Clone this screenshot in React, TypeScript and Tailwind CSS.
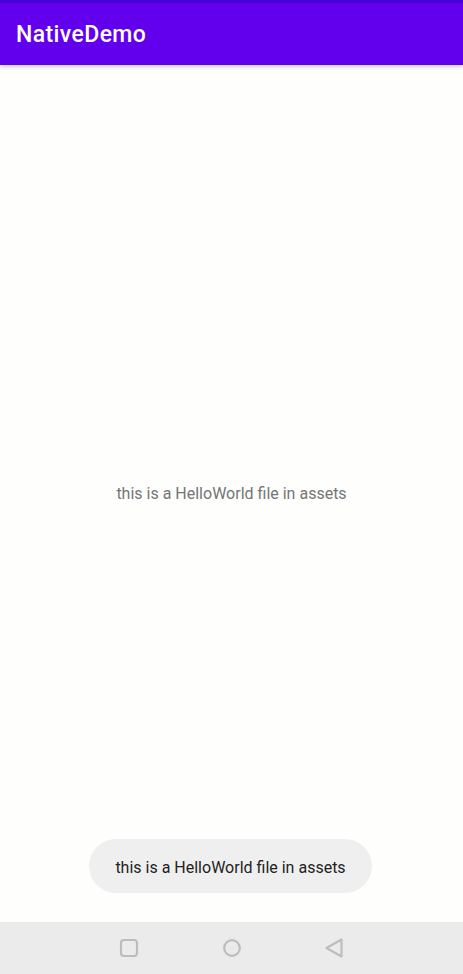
export default function App() {
  const msg = "this is a HelloWorld file in assets";

  return (
    <div
      className="relative flex h-[974px] w-[463px] flex-col overflow-hidden bg-[#fefffd]"
      style={{ fontFamily: "Roboto, 'Noto Sans', sans-serif" }}
    >
      <div className="h-[3px] bg-[#4a00d8]" />
      <header className="z-10 flex h-[62px] items-center bg-[#6200ee] px-4 pt-[2px] shadow-[0_2px_4px_rgba(0,0,0,0.2)]">
        <h1 className="text-[23px] font-medium tracking-[0.4px] text-white">NativeDemo</h1>
      </header>

      <main className="flex flex-1 items-center justify-center pt-[1px]">
        <p className="text-[16px] text-[#757575]">{msg}</p>
      </main>

      <nav className="flex h-[52px] items-center justify-center bg-[#eaebea]">
        <div className="flex w-[225px] items-center justify-between">
          <svg width="20" height="20" viewBox="0 0 20 20">
            <rect x="2" y="2" width="16" height="16" rx="3" fill="none" stroke="#bcbdbc" strokeWidth="2.2" />
          </svg>
          <svg width="20" height="20" viewBox="0 0 20 20">
            <circle cx="10" cy="10" r="7.8" fill="none" stroke="#bcbdbc" strokeWidth="2.2" />
          </svg>
          <svg width="20" height="20" viewBox="0 0 20 20">
            <path d="M17.5 1.5 L17.5 18.5 L2.5 10 Z" fill="none" stroke="#bcbdbc" strokeWidth="2.2" strokeLinejoin="round" />
          </svg>
        </div>
      </nav>

      <div className="absolute left-[89px] top-[839px] flex h-[54px] w-[283px] items-center justify-center rounded-full bg-[#efefef] pt-[4px]">
        <span className="text-[16px] text-[#222222]">{msg}</span>
      </div>
    </div>
  );
}
